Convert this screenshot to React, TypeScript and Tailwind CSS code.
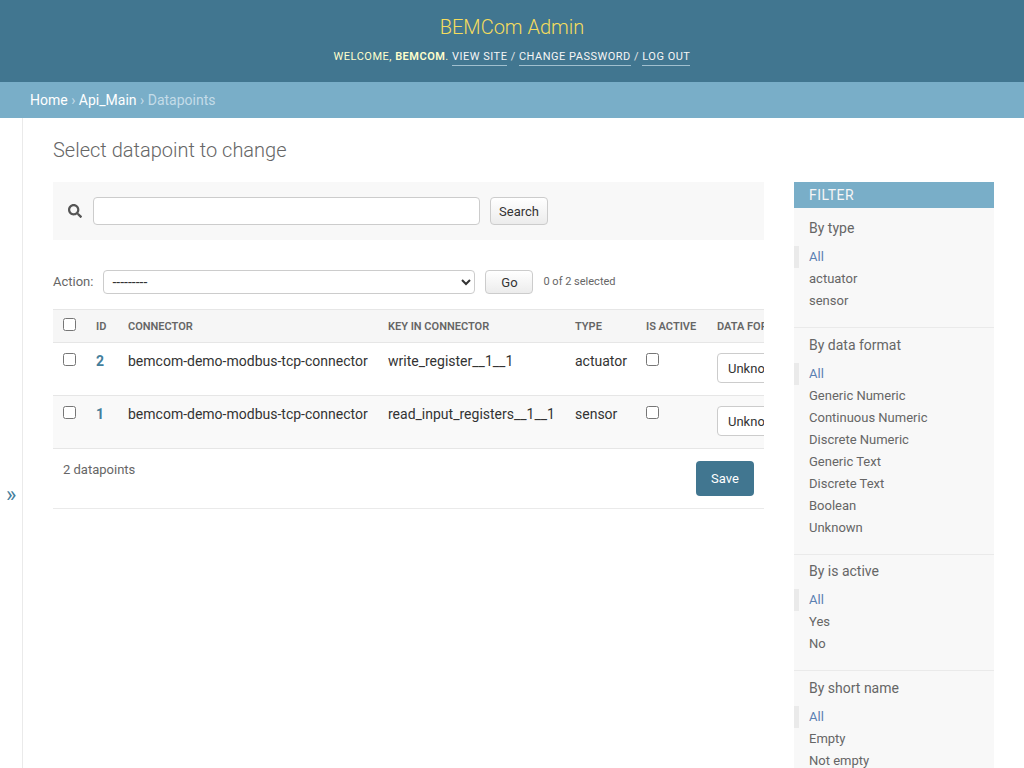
import { FaSearch } from "react-icons/fa";

const rows = [
  { id: 2, connector: "bemcom-demo-modbus-tcp-connector", key: "write_register__1__1", type: "actuator" },
  { id: 1, connector: "bemcom-demo-modbus-tcp-connector", key: "read_input_registers__1__1", type: "sensor" },
];

const filters = [
  { title: "By type", top: "pt-[10px]", items: ["All", "actuator", "sensor"] },
  {
    title: "By data format",
    top: "pt-[7px]",
    items: [
      "All",
      "Generic Numeric",
      "Continuous Numeric",
      "Discrete Numeric",
      "Generic Text",
      "Discrete Text",
      "Boolean",
      "Unknown",
    ],
  },
  { title: "By is active", top: "pt-[6px]", items: ["All", "Yes", "No"] },
  { title: "By short name", top: "pt-[7px]", items: ["All", "Empty", "Not empty"] },
];

const App = () => {
  return (
    <div className="h-screen overflow-hidden bg-white font-['Roboto',sans-serif] text-[14px] text-[#333]">
      {/* Header */}
      <div className="flex h-[82px] flex-col items-center bg-[#417690] pt-[13px]">
        <h1 className="text-[20px] leading-[28px] font-light text-[#f5dd5d]">BEMCom Admin</h1>
        <div className="mt-[8px] flex text-[11px] leading-[16px] tracking-[0.5px] text-[#ffc] uppercase">
          <span>
            Welcome, <strong className="font-semibold">bemcom</strong>.&nbsp;
          </span>
          <a className="border-b border-[#a0bfce] text-[#f5f5f5]">View site</a>
          <span className="text-[#e6e6e6]">&nbsp;/&nbsp;</span>
          <a className="border-b border-[#a0bfce] text-[#f5f5f5]">Change password</a>
          <span className="text-[#e6e6e6]">&nbsp;/&nbsp;</span>
          <a className="border-b border-[#a0bfce] text-[#f5f5f5]">Log out</a>
        </div>
      </div>

      {/* Breadcrumbs */}
      <div className="flex h-[36px] items-center bg-[#79aec8] px-[30px] text-[14px] text-[#c4dce8]">
        <a className="text-white">Home</a>
        <span>&nbsp;›&nbsp;</span>
        <a className="text-white">Api_Main</a>
        <span>&nbsp;›&nbsp;</span>
        <span>Datapoints</span>
      </div>

      <div className="flex h-[650px]">
        {/* Sidebar toggle */}
        <div className="w-[23px] shrink-0 border-r border-[#eaeaea] pt-[361px] pl-[6px] text-[22px] leading-[32px] text-[#447e9b]">
          »
        </div>

        <div className="flex min-w-0 flex-1 flex-col px-[30px]">
          <h2 className="mt-[20px] mb-[20px] text-[20px] leading-[24px] font-light text-[#666]">
            Select datapoint to change
          </h2>

          <div className="flex gap-[30px]">
            <div className="min-w-0 flex-1">
              {/* Search */}
              <div className="flex h-[58px] items-center bg-[#f8f8f8] pl-[15px]">
                <FaSearch className="h-[14px] w-[14px] text-[#555]" />
                <input className="ml-[11px] h-[28px] w-[387px] rounded-[4px] border border-[#ccc] bg-white" />
                <button className="ml-[10px] h-[28px] w-[58px] rounded-[4px] border border-[#ccc] bg-linear-to-b from-white to-[#ececec] pt-[1px] text-[13px] text-[#333]">
                  Search
                </button>
              </div>

              {/* Actions */}
              <div className="mt-[30px] flex h-[24px] items-center text-[13px] text-[#666]">
                <span>Action:</span>
                <select className="ml-[10px] h-[24px] w-[372px] rounded-[4px] border border-[#ccc] bg-white pl-[4px] text-[14px] text-[#333]">
                  <option>---------</option>
                </select>
                <button className="ml-[10px] h-[24px] w-[48px] rounded-[4px] border border-[#ccc] bg-linear-to-b from-white to-[#ececec] pt-[1px] text-[13px] text-[#333]">
                  Go
                </button>
                <span className="ml-[10px] text-[11px]">0 of 2 selected</span>
              </div>

              {/* Result list */}
              <div className="mt-[15px] overflow-hidden">
                <table className="w-[800px] table-fixed border-collapse">
                  <colgroup>
                    <col className="w-[33px]" />
                    <col className="w-[32px]" />
                    <col className="w-[260px]" />
                    <col className="w-[187px]" />
                    <col className="w-[71px]" />
                    <col className="w-[71px]" />
                    <col />
                  </colgroup>
                  <thead>
                    <tr className="h-[33px] border-y border-[#e6e6e6] bg-[#f6f6f6] text-left text-[11px] font-semibold text-[#666] uppercase">
                      <th className="pb-[2px] pl-[10px] font-semibold">
                        <input type="checkbox" className="mb-[1px] block" />
                      </th>
                      <th className="pt-[2px] pl-[10px] font-semibold">ID</th>
                      <th className="pt-[2px] pl-[10px] font-semibold">Connector</th>
                      <th className="pt-[2px] pl-[10px] font-semibold">Key in connector</th>
                      <th className="pt-[2px] pl-[10px] font-semibold">Type</th>
                      <th className="pt-[2px] pl-[10px] font-semibold">Is active</th>
                      <th className="pt-[2px] pl-[10px] font-semibold whitespace-nowrap">Data format</th>
                    </tr>
                  </thead>
                  <tbody>
                    {rows.map((row, index) => (
                      <tr
                        key={row.id}
                        className={`h-[53px] border-b border-[#e6e6e6] align-top ${index === 1 ? "bg-[#f9f9f9]" : "bg-white"}`}
                      >
                        <td className="pt-[10px] pl-[10px]">
                          <input type="checkbox" className="block" />
                        </td>
                        <td className="pt-[9px] pl-[10px] text-[14px] leading-[18px] font-bold text-[#447e9b]">
                          {row.id}
                        </td>
                        <td className="pt-[9px] pl-[10px] leading-[18px]">{row.connector}</td>
                        <td className="pt-[9px] pl-[10px] leading-[18px]">{row.key}</td>
                        <td className="pt-[9px] pl-[10px] leading-[18px]">{row.type}</td>
                        <td className="pt-[10px] pl-[10px]">
                          <input type="checkbox" className="block" />
                        </td>
                        <td className="pt-[10px] pl-[10px]">
                          <select className="h-[30px] w-[130px] rounded-[4px] border border-[#ccc] bg-white pl-[6px] text-[13px] text-[#333]">
                            <option>Unknown</option>
                          </select>
                        </td>
                      </tr>
                    ))}
                  </tbody>
                </table>
              </div>

              {/* Footer */}
              <div className="flex h-[60px] items-start justify-between border-b border-[#eaeaea] px-[10px] pt-[12px] text-[13px] text-[#666]">
                <span className="leading-[18px]">2 datapoints</span>
                <button className="h-[35px] w-[58px] rounded-[4px] bg-[#417690] text-[13px] text-white">Save</button>
              </div>
            </div>

            {/* Filter */}
            <div className="w-[200px] shrink-0 self-start bg-[#f8f8f8]">
              <h2 className="h-[26px] bg-[#79aec8] pl-[15px] text-[14px] leading-[26px] tracking-[0.5px] text-[#f5f5f5] uppercase">
                Filter
              </h2>
              {filters.map((group) => (
                <div key={group.title} className={`border-b border-[#eaeaea] pb-[15px] ${group.top}`}>
                  <h3 className="pl-[15px] text-[14px] leading-[20px] text-[#666]">{group.title}</h3>
                  <ul className="mt-[8px] text-[13px] leading-[22px] text-[#666]">
                    {group.items.map((item, index) => (
                      <li
                        key={item}
                        className={
                          index === 0
                            ? "border-l-[5px] border-[#eaeaea] pl-[10px] text-[#5b80b2]"
                            : "border-l-[5px] border-transparent pl-[10px]"
                        }
                      >
                        {item}
                      </li>
                    ))}
                  </ul>
                </div>
              ))}
            </div>
          </div>
        </div>
      </div>
    </div>
  );
};

export default App;
